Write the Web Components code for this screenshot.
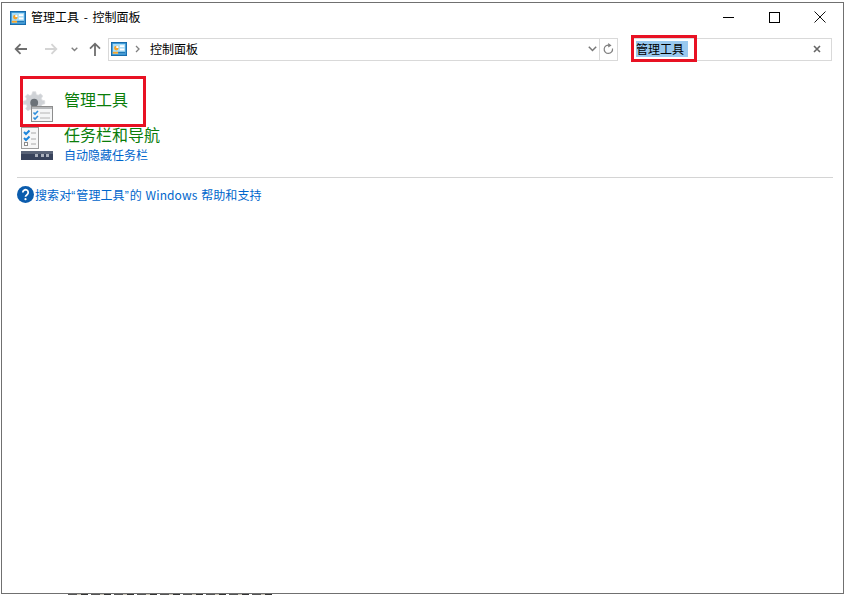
<!DOCTYPE html>
<html lang="zh-CN"><head><meta charset="utf-8">
<style>
html,body{margin:0;padding:0;background:#fff;width:845px;height:595px;overflow:hidden}
body{font-family:"Noto Sans CJK SC","Noto Sans",sans-serif;font-size:12px;position:relative}
</style></head><body>
<cp-window>
  <title-bar slot="title">管理工具 - 控制面板</title-bar>
  <nav-bar slot="nav" path="控制面板" query="管理工具"></nav-bar>
  <result-item icon="admin" title="管理工具"></result-item>
  <result-item icon="task" title="任务栏和导航" link="自动隐藏任务栏"></result-item>
  <help-row>搜索对<span style="font-family:'Liberation Sans';letter-spacing:1px">“</span>管理工具<span style="font-family:'Liberation Sans';letter-spacing:1px">”</span>的 Windows 帮助和支持</help-row>
  <red-box style="left:18px;top:73px;width:126px;height:51px"></red-box>
  <red-box style="left:629px;top:32px;width:66px;height:27px"></red-box>
</cp-window>
<desk-strip></desk-strip>
<script>
const CP='<svg width="16" height="14" viewBox="0 0 18 15" preserveAspectRatio="none"><rect x=".5" y=".5" width="17" height="14" fill="#2f8fd2" stroke="#0f66a8"/><rect x="2" y="2" width="14" height="11" fill="#a8dcf6"/><circle cx="6" cy="6.5" r="2.600" fill="#f4a32a"/><path d="M6 6.500V3.900A2.600 2.600 0 0 1 8.600 6.500Z" fill="#fff"/><rect x="10" y="3.500" width="5" height="2" fill="#fff"/><rect x="10" y="7" width="5" height="2" fill="#fff"/><rect x="2" y="10.500" width="6" height="2" fill="#f4a32a"/><rect x="8" y="10.500" width="8" height="2" fill="#1f78b8"/></svg>';
function def(name,css,html){customElements.define(name,class extends HTMLElement{connectedCallback(){if(this.shadowRoot)return;const s=this.attachShadow({mode:'open'});s.innerHTML='<style>'+css+'</style>'+(typeof html==='function'?html(this):html);}});}

def('cp-window',`
:host{display:block;position:relative;box-sizing:border-box;margin:2px 0 0 1px;width:843px;height:592px;border:1px solid #707070;background:#fff}
.content{display:flex;flex-direction:column;padding:28px 0 0 15px}
`,`<slot name="title"></slot><slot name="nav"></slot><div class="content"><slot></slot></div>`);

def('title-bar',`
:host{display:flex;align-items:center;height:30px;color:#000;font-size:12px;padding-left:8px;box-sizing:border-box}
.ic{display:flex;margin-right:5px}
.t{flex:1;line-height:30px;margin-top:-2px;white-space:nowrap;word-spacing:2px}
.b{width:46px;height:30px;display:flex;align-items:center;justify-content:center;margin-top:-2px}
.b svg{display:block}
`,`<span class="ic">${CP}</span><span class="t"><slot></slot></span>
<span class="b"><svg width="11" height="11"><path d="M0 5.500H11" stroke="#000"/></svg></span>
<span class="b"><svg width="11" height="11"><rect x=".5" y=".5" width="10" height="10" fill="none" stroke="#000"/></svg></span>
<span class="b"><svg width="12" height="12"><path d="M.5.5L11.500 11.500M11.500.5L.5 11.500" stroke="#111" fill="none"/></svg></span>`);

def('nav-bar',`
:host{display:flex;align-items:center;height:24px;margin-top:4px;box-sizing:border-box;padding-left:11px;color:#000;font-size:12px}
.navb{display:flex;align-items:center;justify-content:center}
.addr{display:flex;align-items:center;box-sizing:border-box;width:510px;height:23px;border:1px solid #d9d9d9;margin-left:6px;padding-left:2px}
.sep{margin:0 10px 0 8px;display:flex}
.p{flex:1;white-space:nowrap;margin-top:-2px}
.chev{display:flex;margin-right:2px}
.ref{width:17px;height:21px;border-left:1px solid #d9d9d9;display:flex;align-items:center;justify-content:center}
.search{display:flex;align-items:center;box-sizing:border-box;width:201px;height:23px;border:1px solid #d9d9d9;margin-left:13px;padding-left:4px}
.sel{background:#99c9ef;height:16px;line-height:15px;padding-right:4px;white-space:nowrap}
.x{margin-left:auto;margin-right:10px;display:flex}
`,e=>`<span class="navb" style="width:16px"><svg width="14" height="12" viewBox="0 0 14 12"><path d="M13 6H2M6.500 1.200L1.700 6l4.800 4.800" stroke="#6e6e6e" stroke-width="1.800" fill="none"/></svg></span>
<span class="navb" style="width:16px;margin-left:14px"><svg width="14" height="12" viewBox="0 0 14 12"><path d="M1 6H12M7.500 1.200L12.300 6l-4.800 4.800" stroke="#d4d4d4" stroke-width="1.800" fill="none"/></svg></span>
<span class="navb" style="width:10px;margin-left:10px"><svg width="7" height="5" viewBox="0 0 7 5"><path d="M.7.7L3.500 3.500 6.300.7" stroke="#808080" stroke-width="1.400" fill="none"/></svg></span>
<span class="navb" style="width:14px;margin-left:9px"><svg width="12" height="14" viewBox="0 0 12 14"><path d="M6 14V2M1 6.700L6 1.700l5 5" stroke="#6e6e6e" stroke-width="1.800" fill="none"/></svg></span>
<div class="addr">${CP}<span class="sep"><svg width="5" height="8" viewBox="0 0 5 8"><path d="M1 1l3 3-3 3" stroke="#808080" stroke-width="1.300" fill="none"/></svg></span><span class="p">${e.getAttribute('path')}</span>
<span class="chev"><svg width="9" height="6" viewBox="0 0 9 6"><path d="M.8.8L4.500 4.500 8.200.8" stroke="#777" stroke-width="1.500" fill="none"/></svg></span>
<span class="ref"><svg width="11" height="12" viewBox="0 0 11 12"><path d="M9.500 5.500A4.200 4.200 0 1 1 6.500 2.200" stroke="#808080" stroke-width="1.200" fill="none"/><path d="M5.200 0L8.600 2.400 5.200 4.500Z" fill="#808080"/></svg></span></div>
<div class="search"><span class="sel">${e.getAttribute('query')}</span><span class="x"><svg width="8" height="8" viewBox="0 0 8 8"><path d="M1 1l6 6M7 1L1 7" stroke="#666" stroke-width="1.600"/></svg></span></div>`);

const ICONS={
admin:`<svg width="34" height="34" viewBox="0 0 34 34"><g transform="translate(2.500 2) scale(.78)"><path d="M13 1h4l.7 3.400 2.400 1 3-1.800 2.800 2.800-1.800 3 1 2.400 3.400.7v4l-3.400.7-1 2.400 1.800 3-2.800 2.800-3-1.800-2.400 1-.7 3.400h-4l-.7-3.400-2.400-1-3 1.800-2.800-2.800 1.800-3-1-2.400L1 17v-4l3.400-.7 1-2.400-1.800-3 2.800-2.800 3 1.800 2.400-1Z" fill="#cfd2d6" stroke="#dcdee0"/><circle cx="15" cy="15" r="5" fill="#6c7278"/></g><rect x="11.500" y="17.500" width="21" height="15" fill="#f5f6f7" stroke="#8d8d8d"/><rect x="12" y="18" width="20" height="2" fill="#b6b8ba"/><path d="M13.500 23.500l1.500 1.500 3-3M13.500 28.500l1.500 1.500 3-3" stroke="#2f8fdc" stroke-width="1.600" fill="none"/><path d="M20 24h10M20 29h10" stroke="#b4b4b4"/></svg>`,
task:`<svg width="34" height="34" viewBox="0 0 34 34"><rect x="1.500" y=".5" width="17" height="21" fill="#f7f7f7" stroke="#9c9c9c"/><path d="M4 5l2 2 3.500-3.500M4 11l2 2 3.500-3.500" stroke="#1d86dc" stroke-width="2" fill="none"/><path d="M11 6h5M11 12h5M11 17h5" stroke="#a8a8a8"/><rect x="4.500" y="15.500" width="3" height="3" fill="#fff" stroke="#8c8c8c"/><rect x="1" y="24" width="32" height="9" fill="#38435c"/><rect x="1" y="24" width="32" height="3" fill="#5a6478"/><rect x="15" y="27" width="3" height="3" fill="#aab0bc"/><rect x="21" y="27" width="3" height="3" fill="#aab0bc"/><rect x="26" y="27" width="3" height="3" fill="#aab0bc"/></svg>`};

def('result-item',`
:host{display:flex;align-items:flex-start;color:#0a7d0a}
.ic{width:47px;flex:none;display:flex;padding-left:3px;box-sizing:border-box}
.tt{font-size:16px;line-height:19px;white-space:nowrap}
.ln{font-size:12px;line-height:15px;margin-top:3px;color:#0066cc;white-space:nowrap}
:host([icon="admin"]){height:36px}
:host([icon="task"]){height:58px}
:host([icon="task"]) .ic{padding-top:2px}
.col{display:flex;flex-direction:column}
:host([icon="admin"]) .col{padding-top:1px}
`,e=>`<div class="ic">${ICONS[e.getAttribute('icon')]}</div><div class="col"><span class="tt">${e.getAttribute('title')}</span>${e.getAttribute('link')?`<span class="ln">${e.getAttribute('link')}</span>`:''}</div>`);

def('help-row',`
:host{display:flex;align-items:center;border-top:1px solid #d4d4d4;width:816px;padding-top:8px;color:#0066cc;font-size:12px;white-space:nowrap;margin-top:-6px}
svg{margin-right:1px;flex:none}
`,`<svg width="17" height="17" viewBox="0 0 17 17"><circle cx="8.500" cy="8.500" r="8.500" fill="#0b5cad"/><path d="M5.800 6.500a2.700 2.700 0 1 1 4.200 2.200c-1 .7-1.500 1.100-1.500 2.100" stroke="#fff" stroke-width="1.800" fill="none"/><circle cx="8.500" cy="13.200" r="1.100" fill="#fff"/></svg><span style="letter-spacing:.1px;word-spacing:1px;margin-top:-1px"><slot></slot></span>`);

def('red-box',`:host{display:block;position:absolute;box-sizing:border-box;border:3px solid #e81123;pointer-events:none}`,``);
def('desk-strip',`:host{display:block;position:absolute;left:68px;top:594px;width:204px;height:1px;background:repeating-linear-gradient(90deg,#555 0 9px,#c9c4b8 9px 13px,#333 13px 20px,#fff 20px 23px)}`,``);
</script>
</body></html>
